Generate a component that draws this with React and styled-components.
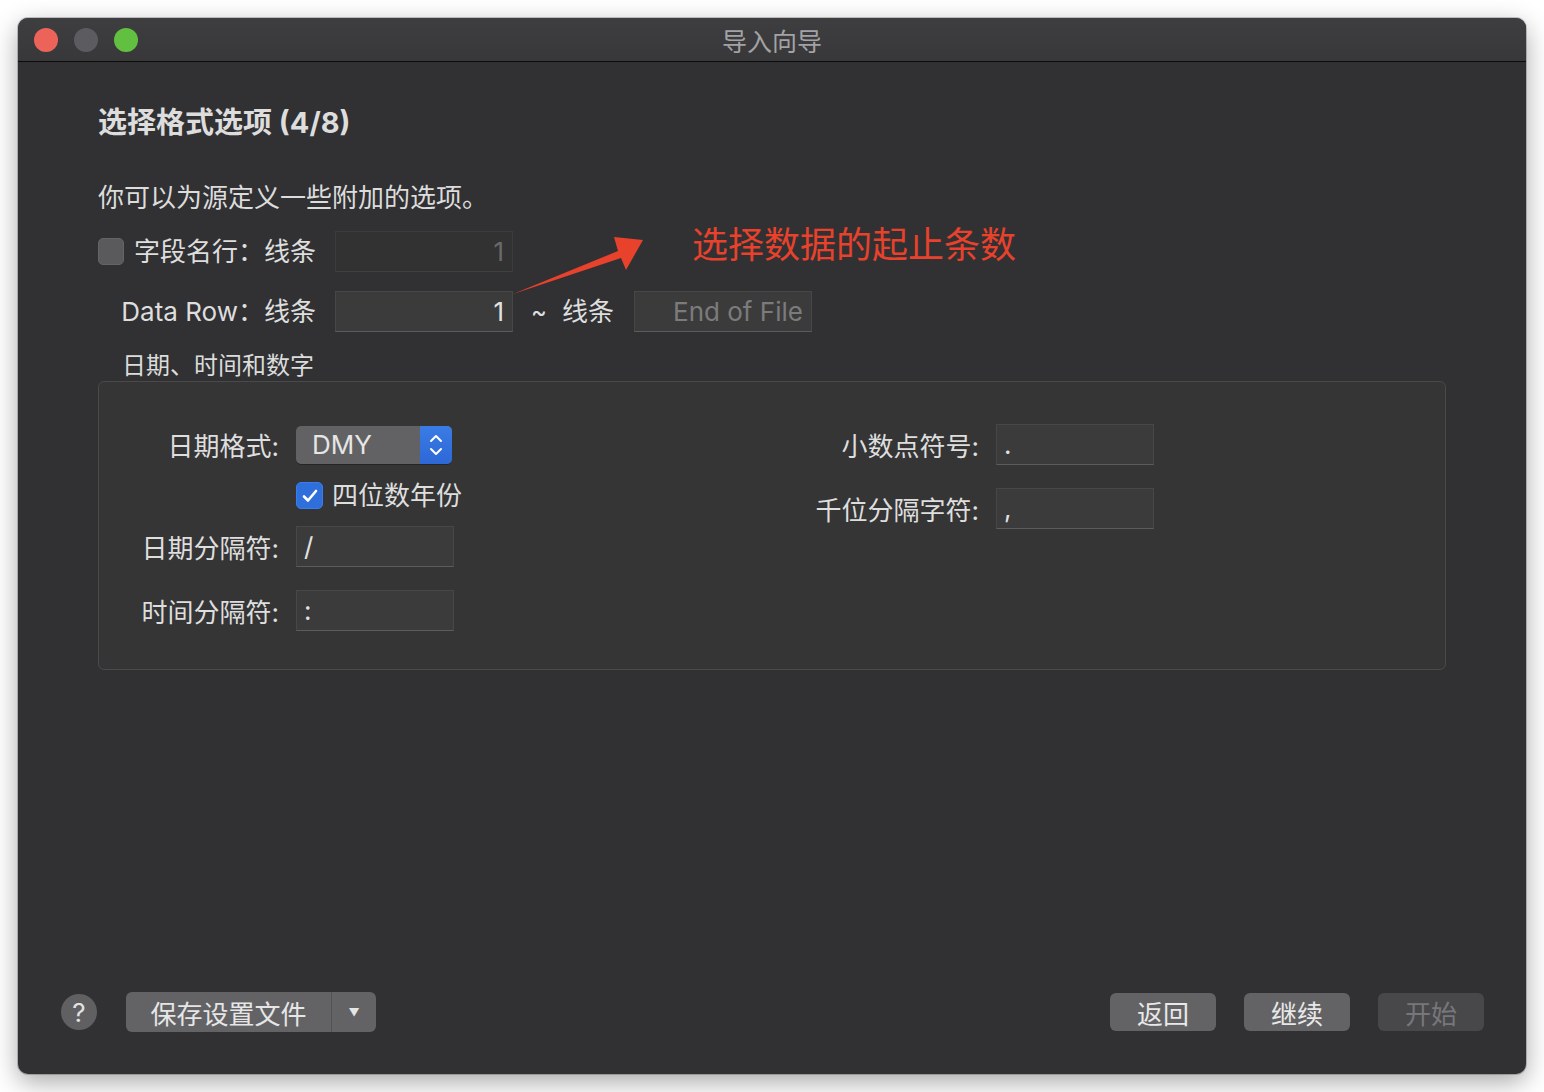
import React from "react";
import styled, { createGlobalStyle } from "styled-components";

const GlobalStyle = createGlobalStyle`
  html, body {
    margin: 0;
    background: #ffffff;
  }
  body {
    padding: 18px;
    font-family: Inter, "Noto Sans CJK SC", sans-serif;
  }
`;

const App = () => {
  return (
    <>
      <GlobalStyle />
      <Window>
        <TitleBar>
          <Lights>
            <Light $color="#ec6459" />
            <Light $color="#5c5c60" />
            <Light $color="#62c040" />
          </Lights>
          <WindowTitle>导入向导</WindowTitle>
          <span />
        </TitleBar>

        <Content>
          <Heading>选择格式选项 (4/8)</Heading>
          <Subtitle>你可以为源定义一些附加的选项。</Subtitle>

          <FieldRow $mt={15}>
            <LabelCell>
              <CheckBox />
              <Label>字段名行：线条</Label>
            </LabelCell>
            <TextField $width={178} $align="right" $disabled>
              1
            </TextField>
          </FieldRow>

          <FieldRow $mt={19}>
            <LabelCell>
              <Label>Data Row：线条</Label>
            </LabelCell>
            <TextField $width={178} $align="right">
              1
            </TextField>
            <Tilde>~</Tilde>
            <Label>线条</Label>
            <TextField $width={178} $align="right" $placeholder $ml={20}>
              End of File
            </TextField>
          </FieldRow>

          <GroupLabel>日期、时间和数字</GroupLabel>
          <GroupBox>
            <Column>
              <BoxRow $h={41}>
                <BoxLabel>日期格式:</BoxLabel>
                <PopUp>
                  <PopUpValue>DMY</PopUpValue>
                  <Stepper>
                    <svg width="16" height="26" viewBox="0 0 16 26">
                      <path
                        d="M3 9 L8 4 L13 9 M3 17 L8 22 L13 17"
                        fill="none"
                        stroke="#ffffff"
                        strokeWidth="2"
                        strokeLinecap="round"
                        strokeLinejoin="round"
                      />
                    </svg>
                  </Stepper>
                </PopUp>
              </BoxRow>
              <BoxRow $h={27} $mt={17}>
                <BoxLabel />
                <CheckBox $checked>
                  <svg width="18" height="16" viewBox="0 0 18 16">
                    <path
                      d="M3 8.5 L7 12.5 L15 3"
                      fill="none"
                      stroke="#ffffff"
                      strokeWidth="2.6"
                      strokeLinecap="round"
                      strokeLinejoin="round"
                    />
                  </svg>
                </CheckBox>
                <Label $ml={9}>四位数年份</Label>
              </BoxRow>
              <BoxRow $h={41} $mt={17}>
                <BoxLabel>日期分隔符:</BoxLabel>
                <TextField $width={158}>/</TextField>
              </BoxRow>
              <BoxRow $h={41} $mt={23}>
                <BoxLabel>时间分隔符:</BoxLabel>
                <TextField $width={158}>:</TextField>
              </BoxRow>
            </Column>

            <Column $ml={317}>
              <BoxRow $h={41}>
                <BoxLabel $width={200}>小数点符号:</BoxLabel>
                <TextField $width={158}>.</TextField>
              </BoxRow>
              <BoxRow $h={41} $mt={23}>
                <BoxLabel $width={200}>千位分隔字符:</BoxLabel>
                <TextField $width={158}>,</TextField>
              </BoxRow>
            </Column>
          </GroupBox>

          {/* 빨간 주석 */}
          <NoteText>选择数据的起止条数</NoteText>
          <NoteArrow width="150" height="72" viewBox="0 0 150 72">
            <polygon
              points="8,64 113,21 109,7 138,10 121,40 116,28"
              fill="#e8412c"
            />
          </NoteArrow>
        </Content>

        <Footer>
          <HelpButton>?</HelpButton>
          <SplitButton>
            <SplitMain>保存设置文件</SplitMain>
            <SplitArrow>▼</SplitArrow>
          </SplitButton>
          <ButtonGroup>
            <PushButton>返回</PushButton>
            <PushButton>继续</PushButton>
            <PushButton $disabled>开始</PushButton>
          </ButtonGroup>
        </Footer>
      </Window>
    </>
  );
};

export default App;

const Window = styled.div`
  width: 1508px;
  height: 1056px;
  border-radius: 10px;
  overflow: hidden;
  display: flex;
  flex-direction: column;
  background: #313133;
  box-shadow: 0 8px 26px rgba(0, 0, 0, 0.35), 0 0 0 1px rgba(0, 0, 0, 0.2);
  color: #dedede;
`;

const TitleBar = styled.div`
  height: 43px;
  display: grid;
  grid-template-columns: 1fr auto 1fr;
  align-items: center;
  background: linear-gradient(#3e3e41, #38383b);
  border-bottom: 1px solid #0c0c0c;
`;

const Lights = styled.div`
  display: flex;
  gap: 16px;
  padding-left: 16px;
`;

const Light = styled.span`
  width: 24px;
  height: 24px;
  border-radius: 50%;
  background: ${({ $color }) => $color};
`;

const WindowTitle = styled.div`
  font-size: 25px;
  color: #a3a3a5;
  font-family: "Noto Sans CJK SC", sans-serif;
`;

const Content = styled.div`
  position: relative;
  flex: 1;
  padding: 41px 80px 0;
`;

const Heading = styled.h1`
  margin: 0;
  font-size: 29px;
  line-height: 40px;
  font-weight: 700;
  color: #dddddd;
`;

const Subtitle = styled.p`
  margin: 37px 0 0;
  font-size: 26px;
  line-height: 36px;
  color: #dcdcdc;
`;

const FieldRow = styled.div`
  display: flex;
  align-items: center;
  height: 41px;
  margin-top: ${({ $mt }) => $mt || 0}px;
`;

const LabelCell = styled.div`
  width: 218px;
  display: flex;
  align-items: center;
  justify-content: flex-end;
  gap: 10px;
  margin-right: 19px;
`;

const Label = styled.span`
  font-size: 26px;
  line-height: 36px;
  color: #dedede;
  white-space: nowrap;
  margin-left: ${({ $ml }) => $ml || 0}px;
`;

const CheckBox = styled.span`
  width: 27px;
  height: 27px;
  box-sizing: border-box;
  border-radius: 5px;
  display: inline-flex;
  align-items: center;
  justify-content: center;
  background: ${({ $checked }) => ($checked ? "#2f6fdc" : "#5a5a5d")};
  border: 1px solid ${({ $checked }) => ($checked ? "#3a7cf0" : "#646467")};
  margin-right: auto;
`;

const TextField = styled.div`
  box-sizing: border-box;
  width: ${({ $width }) => $width}px;
  height: 41px;
  margin-left: ${({ $ml }) => $ml || 0}px;
  padding: 0 8px 0 7px;
  display: flex;
  align-items: center;
  justify-content: ${({ $align }) =>
    $align === "right" ? "flex-end" : "flex-start"};
  font-size: 26px;
  background: ${({ $disabled }) => ($disabled ? "#323232" : "#3b3b3c")};
  border: 1px solid ${({ $disabled }) => ($disabled ? "#3c3c3c" : "#474748")};
  border-bottom-color: ${({ $disabled }) => ($disabled ? "#404040" : "#5c5c5d")};
  color: ${({ $disabled, $placeholder }) =>
    $disabled ? "#6a6a6a" : $placeholder ? "#7b7b7b" : "#e2e2e2"};
`;

const Tilde = styled.span`
  font-size: 24px;
  color: #dedede;
  margin: 0 15px 0 18px;
`;

const GroupLabel = styled.div`
  margin-top: 19px;
  padding-left: 24px;
  font-size: 24px;
  line-height: 30px;
  color: #dcdcdc;
`;

const GroupBox = styled.div`
  box-sizing: border-box;
  height: 289px;
  display: flex;
  align-items: flex-start;
  padding-top: 42px;
  background: #353536;
  border: 1px solid #4a4a4b;
  border-radius: 6px;
`;

const Column = styled.div`
  display: flex;
  flex-direction: column;
  margin-left: ${({ $ml }) => $ml || 0}px;
`;

const BoxRow = styled.div`
  display: flex;
  align-items: center;
  height: ${({ $h }) => $h}px;
  margin-top: ${({ $mt }) => $mt || 0}px;
`;

const BoxLabel = styled.span`
  width: ${({ $width }) => $width || 180}px;
  margin-right: 17px;
  text-align: right;
  font-size: 26px;
  color: #dedede;
  white-space: nowrap;
`;

const PopUp = styled.div`
  width: 156px;
  height: 38px;
  display: flex;
  border-radius: 5px;
  overflow: hidden;
  background: #626264;
  box-shadow: 0 1px 0 rgba(0, 0, 0, 0.3);
`;

const PopUpValue = styled.span`
  flex: 1;
  padding-left: 16px;
  display: flex;
  align-items: center;
  font-size: 26px;
  color: #e6e6e6;
`;

const Stepper = styled.span`
  width: 32px;
  display: flex;
  align-items: center;
  justify-content: center;
  background: linear-gradient(#3a7ce6, #2d68d6);
`;

const NoteText = styled.div`
  position: absolute;
  left: 674px;
  top: 158px;
  font-size: 36px;
  line-height: 44px;
  color: #e8412c;
  font-family: "Noto Sans CJK SC", sans-serif;
`;

const NoteArrow = styled.svg`
  position: absolute;
  left: 487px;
  top: 168px;
`;

const Footer = styled.div`
  display: flex;
  align-items: center;
  padding: 0 42px 42px 43px;
`;

const HelpButton = styled.span`
  width: 36px;
  height: 36px;
  border-radius: 50%;
  background: #606063;
  color: #e2e2e2;
  font-size: 26px;
  display: flex;
  align-items: center;
  justify-content: center;
  margin-right: 29px;
`;

const SplitButton = styled.div`
  display: flex;
  height: 40px;
  border-radius: 6px;
  overflow: hidden;
  background: #636366;
`;

const SplitMain = styled.span`
  width: 205px;
  display: flex;
  align-items: center;
  justify-content: center;
  font-size: 26px;
  color: #e6e6e6;
  border-right: 1px solid #525255;
`;

const SplitArrow = styled.span`
  width: 44px;
  display: flex;
  align-items: center;
  justify-content: center;
  font-size: 11px;
  color: #e6e6e6;
`;

const ButtonGroup = styled.div`
  margin-left: auto;
  display: flex;
  gap: 28px;
`;

const PushButton = styled.span`
  width: 106px;
  height: 38px;
  border-radius: 6px;
  display: flex;
  align-items: center;
  justify-content: center;
  font-size: 26px;
  background: ${({ $disabled }) => ($disabled ? "#48484b" : "#636366")};
  color: ${({ $disabled }) => ($disabled ? "#77777a" : "#e8e8e8")};
`;
